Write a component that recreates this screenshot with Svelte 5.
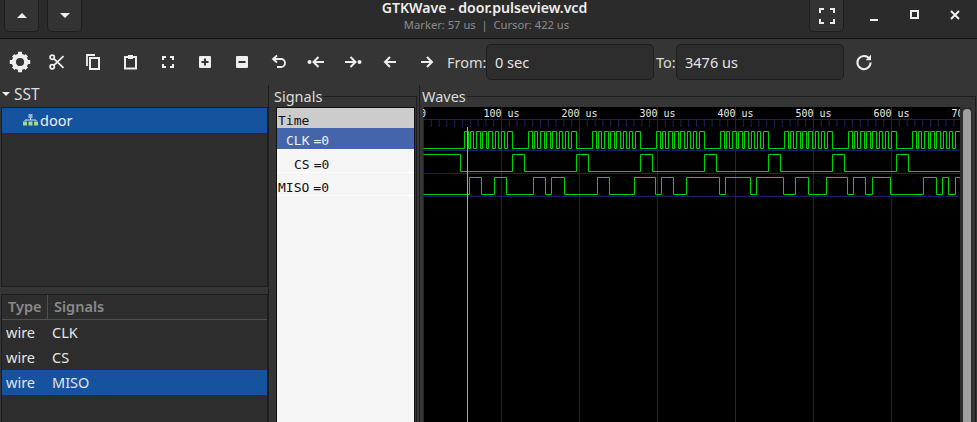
<script>
	const scale = 0.78;
	const majors = [0, 100, 200, 300, 400, 500, 600, 700];
	const ticks = Array.from({ length: 71 }, (_, i) => i * 10).filter((t) => t % 100 !== 0);
	const x0 = 0.5;
	const tx = (t) => x0 + t * scale;

	// edges in canvas px, wave starts low or high
	function wave(edges, hi, lo, startHigh) {
		let high = startHigh;
		let d = `M0.5 ${high ? hi : lo}`;
		for (const e of edges) {
			d += ` H${e} V${high ? lo : hi}`;
			high = !high;
		}
		return d + ` H537`;
	}

	const clkEdges = [];
	for (let b = 0; b < 8; b++) {
		const s = 41 + b * 64;
		for (let p = 0; p < 8; p++) {
			const rise = s + p * 6.1;
			const width = p === 0 ? 4 : p === 7 ? 5 : 3.3;
			clkEdges.push(Math.round(rise) + 0.5, Math.round(rise + width) + 0.5);
		}
	}
	const clkPath = wave(clkEdges.filter((e) => e < 537), 24.5, 41.5, false);

	const csPath = wave(
		[37.5, 89.5, 101.5, 153.5, 165.5, 217.5, 229.5, 281.5, 293.5, 345.5, 357.5, 409.5, 421.5, 473.5, 485.5],
		47.5, 64.5, true
	);

	const misoPath = wave(
		[46.5, 58.5, 71.5, 83.5, 110.5, 122.5, 128.5, 141.5, 174.5, 186.5, 211.5, 232.5, 238.5, 250.5, 263.5, 296.5, 302.5, 327.5, 333.5, 360.5, 372.5, 385.5, 403.5, 424.5, 430.5, 442.5, 449.5, 467.5, 500.5, 513.5, 519.5, 525.5, 532.5],
		70.5, 87.5, false
	);

	const tools = ['gear', 'cut', 'copy', 'paste', 'fit', 'plus', 'minus', 'undo', 'prev', 'next', 'left', 'right'];
</script>

<div class="window">
	<header class="titlebar">
		<div class="side">
			<button class="hbtn"><span class="tri up"></span></button>
			<button class="hbtn"><span class="tri down"></span></button>
		</div>
		<div class="title">
			<div class="name">GTKWave - door.pulseview.vcd</div>
			<div class="sub">Marker: 57 us &nbsp;|&nbsp; Cursor: 422 us</div>
		</div>
		<div class="side right">
			<button class="hbtn">
				<svg width="16" height="16" viewBox="0 0 16 16"><path d="M1 5V1H5M11 1H15V5M15 11V15H11M5 15H1V11" class="st" /></svg>
			</button>
			<div class="wctl">
				<svg width="16" height="16" viewBox="0 0 16 16"><rect x="3" y="12" width="8" height="2" fill="#eee" /></svg>
				<svg width="16" height="16" viewBox="0 0 16 16"><rect x="4" y="4" width="7" height="7" fill="none" stroke="#eee" stroke-width="2" /></svg>
				<svg width="16" height="16" viewBox="0 0 16 16"><path d="M4 4L12 12M12 4L4 12" fill="none" stroke="#eee" stroke-width="2" /></svg>
			</div>
		</div>
	</header>

	<div class="toolbar">
		{#each tools as t}
			<span class="tool">
				{#if t === 'gear'}
					<svg width="22" height="22" viewBox="0 0 22 22">
						<circle cx="11" cy="11" r="6.2" fill="none" stroke="#eee" stroke-width="4.2" />
						<path d="M9 .8H13V4H9ZM9 18H13V21.2H9ZM.8 9H4V13H.8ZM18 9H21.2V13H18ZM3 5.6L5.6 3L8 5.4L5.4 8ZM14 16.6L16.6 14L19 16.4L16.4 19ZM16.4 3L19 5.6L16.6 8L14 5.4ZM5.4 14L8 16.6L5.6 19L3 16.4Z" fill="#eee" />
					</svg>
				{:else if t === 'cut'}
					<svg width="16" height="16" viewBox="0 0 16 16">
						<circle cx="3.2" cy="3.2" r="2.1" class="st2" /><circle cx="3.2" cy="12.8" r="2.1" class="st2" />
						<path d="M4.8 4.6L14.5 13.8M4.8 11.4L14.5 2.2" class="st2" />
					</svg>
				{:else if t === 'copy'}
					<svg width="16" height="16" viewBox="0 0 16 16">
						<path d="M1 12V1H9" class="st2" /><rect x="4" y="4" width="9" height="11" class="st" />
					</svg>
				{:else if t === 'paste'}
					<svg width="16" height="16" viewBox="0 0 16 16">
						<path d="M5 3H2V14.5H13V3H10" class="st" /><rect x="5" y="1" width="5" height="4" fill="#eee" />
					</svg>
				{:else if t === 'fit'}
					<svg width="16" height="16" viewBox="0 0 16 16"><path d="M3 6V3H6M10 3H13V6M13 10V13H10M6 13H3V10" class="st" /></svg>
				{:else if t === 'plus'}
					<svg width="16" height="16" viewBox="0 0 16 16">
						<rect x="2" y="2" width="12" height="12" rx="1" fill="#eee" /><path d="M4.5 8H11.5M8 4.5V11.5" stroke="#333" stroke-width="2" />
					</svg>
				{:else if t === 'minus'}
					<svg width="16" height="16" viewBox="0 0 16 16">
						<rect x="2" y="2" width="12" height="12" rx="1" fill="#eee" /><path d="M4.5 8H11.5" stroke="#333" stroke-width="2" />
					</svg>
				{:else if t === 'undo'}
					<svg width="16" height="16" viewBox="0 0 16 16">
						<path d="M3 5H10A3.8 3.8 0 0 1 10 13H6" class="st2" /><path d="M6 1.5L2 5L6 8.5" class="st2" />
					</svg>
				{:else if t === 'prev'}
					<svg width="18" height="16" viewBox="0 0 18 16">
						<circle cx="2.5" cy="8" r="2" fill="#eee" /><path d="M7 8H17M11.5 3L6.5 8L11.5 13" class="st" />
					</svg>
				{:else if t === 'next'}
					<svg width="18" height="16" viewBox="0 0 18 16">
						<circle cx="15.5" cy="8" r="2" fill="#eee" /><path d="M1 8H11M6.5 3L11.5 8L6.5 13" class="st" />
					</svg>
				{:else if t === 'left'}
					<svg width="16" height="16" viewBox="0 0 16 16"><path d="M3 8H14M8 3L3 8L8 13" class="st" /></svg>
				{:else}
					<svg width="16" height="16" viewBox="0 0 16 16"><path d="M2 8H13M8 3L13 8L8 13" class="st" /></svg>
				{/if}
			</span>
		{/each}
		<span class="lbl from">From:</span>
		<div class="entry">0 sec</div>
		<span class="lbl to">To:</span>
		<div class="entry">3476 us</div>
		<span class="tool reload">
			<svg width="18" height="18" viewBox="0 0 18 18">
				<path d="M14.6 6A6.6 6.6 0 1 0 15.6 9.6" class="st" /><path d="M16 1.8V7.2H10.6Z" fill="#eee" />
			</svg>
		</span>
	</div>

	<main class="panes">
		<section class="left">
			<div class="sst-head"><span class="tri small"></span>SST</div>
			<div class="tree">
				<div class="tree-row">
					<svg width="15" height="12" viewBox="0 0 15 12">
						<rect x="5.5" y="0" width="4" height="4" fill="#8fb8ea" />
						<path d="M7.5 4V6M2 7V6H13V7" stroke="#d8e6f5" fill="none" />
						<rect x="0" y="7.5" width="4" height="4" fill="#a5dc8a" />
						<rect x="5.5" y="7.5" width="4" height="4" fill="#a5dc8a" />
						<rect x="11" y="7.5" width="4" height="4" fill="#a5dc8a" />
					</svg>
					<span>door</span>
				</div>
			</div>
			<div class="siglist">
				<div class="list-head"><span class="c1">Type</span><span class="c2">Signals</span></div>
				<div class="list-row"><span class="c1">wire</span><span>CLK</span></div>
				<div class="list-row"><span class="c1">wire</span><span>CS</span></div>
				<div class="list-row sel"><span class="c1">wire</span><span>MISO</span></div>
			</div>
		</section>

		<section class="signals">
			<div class="frame-label">Signals</div>
			<div class="frame-body">
				<div class="sig-box">
					<div class="sig time">Time</div>
					<div class="sig clk"><span>CLK</span>=0</div>
					<div class="sig cs"><span>CS</span>=0</div>
					<div class="sig miso"><span>MISO</span>=0</div>
				</div>
			</div>
		</section>

		<section class="waves">
			<div class="frame-label">Waves</div>
			<div class="frame-body wave-box">
				<svg class="canvas" width="537" height="315" viewBox="0 0 537 315">
					<rect width="537" height="315" fill="#000" />
					{#each majors as m}
						<line x1={tx(m)} x2={tx(m)} y1="0" y2="315" stroke="#1e1e68" />
					{/each}
					<line x1="0" x2="537" y1="12.5" y2="12.5" stroke="#1e1e68" />
					{#each ticks as t}
						<line x1={tx(t)} x2={tx(t)} y1="13" y2="20" stroke="#1e1e68" />
					{/each}
					<line x1="0" x2="537" y1="43.5" y2="43.5" stroke="#1e1e68" />
					<line x1="0" x2="537" y1="66.5" y2="66.5" stroke="#1e1e68" />
					<line x1="0" x2="537" y1="89.5" y2="89.5" stroke="#1e1e68" />
					<text x="-3" y="10" class="tlabel">0</text>
					{#each majors.slice(1) as m}
						<text x={tx(m) - 18} y="10" class="tlabel">{m}</text>
						<text x={tx(m) + 6} y="10" class="tlabel">us</text>
					{/each}
					<path d={clkPath} class="trace" />
					<path d={csPath} class="trace" />
					<path d={misoPath} class="trace" />
					<line x1="44.5" x2="44.5" y1="20" y2="315" stroke="#f08a8a" />
				</svg>
				<div class="scrollbar"><div class="thumb"></div></div>
			</div>
		</section>
	</main>
</div>

<style>
	:global(body) {
		margin: 0;
		background: #333;
		overflow: hidden;
	}

	.window {
		width: 977px;
		height: 422px;
		display: flex;
		flex-direction: column;
		font-family: 'Noto Sans', sans-serif;
		color: #eeeeec;
		background: #353535;
		overflow: hidden;
	}

	.titlebar {
		height: 38px;
		flex: none;
		display: grid;
		grid-template-columns: 1fr auto 1fr;
		background: #2b2b2b;
		border-bottom: 1px solid #131313;
	}

	.side {
		display: flex;
		gap: 8px;
		padding-left: 4px;
	}

	.side.right {
		justify-content: flex-end;
		padding: 0;
		gap: 0;
	}

	.hbtn {
		width: 35px;
		height: 32px;
		padding: 0;
		display: flex;
		align-items: center;
		justify-content: center;
		background: #333;
		border: 1px solid #1d1d1d;
		border-top: none;
		border-radius: 0 0 5px 5px;
		box-sizing: border-box;
	}

	.tri {
		width: 0;
		height: 0;
		border-left: 5px solid transparent;
		border-right: 5px solid transparent;
	}

	.tri.up {
		border-bottom: 5px solid #eee;
	}

	.tri.down {
		border-top: 5px solid #eee;
	}

	.tri.small {
		border-left-width: 4px;
		border-right-width: 4px;
		border-top: 4px solid #eee;
		margin-right: 4px;
		margin-left: 2px;
	}

	.title {
		text-align: center;
		padding-right: 4px;
	}

	.name {
		font-size: 14.1px;
		font-weight: 600;
		line-height: 15px;
		padding-right: 4px;
	}

	.sub {
		font-size: 11.2px;
		line-height: 12px;
		color: #8b8b8b;
		margin-top: 4px;
	}

	.wctl {
		display: flex;
		gap: 24px;
		align-items: center;
		height: 30px;
		padding: 0 14px 0 23px;
	}

	.toolbar {
		height: 46px;
		flex: none;
		display: flex;
		align-items: center;
		padding-left: 1px;
		background: #353535;
	}

	.tool {
		width: 37px;
		display: flex;
		align-items: center;
		justify-content: center;
		flex: none;
	}

	.reload {
		margin-left: 1px;
	}

	.st {
		fill: none;
		stroke: #eee;
		stroke-width: 2;
	}

	.st2 {
		fill: none;
		stroke: #eee;
		stroke-width: 1.8;
	}

	.lbl {
		font-size: 14.5px;
		color: #dcdcdc;
		flex: none;
	}

	.from {
		margin-left: 2px;
		width: 39px;
	}

	.to {
		margin-left: 2px;
		width: 20px;
	}

	.entry {
		width: 168px;
		height: 36px;
		box-sizing: border-box;
		flex: none;
		background: #2d2d2d;
		border: 1px solid #1d1d1d;
		border-radius: 5px;
		padding-left: 8px;
		font-size: 14.5px;
		line-height: 34px;
		color: #e4e4e4;
	}

	.panes {
		flex: 1;
		display: flex;
		min-height: 0;
	}

	.left {
		width: 269px;
		flex: none;
		display: flex;
		flex-direction: column;
		border-right: 1px solid #1d1d1d;
		box-sizing: border-box;
	}

	.sst-head {
		height: 22px;
		padding-bottom: 5px;
		box-sizing: border-box;
		display: flex;
		align-items: center;
		font-size: 15.5px;
		color: #dcdcdc;
		flex: none;
	}

	.tree {
		height: 180px;
		flex: none;
		margin: 0 0 7px 1px;
		background: #2d2d2d;
		border: 1px solid #1d1d1d;
		box-sizing: border-box;
	}

	.tree-row {
		height: 25px;
		padding-bottom: 2px;
		box-sizing: border-box;
		background: #15539e;
		display: flex;
		align-items: center;
		padding-left: 21px;
		gap: 2px;
		font-size: 14.5px;
	}

	.siglist {
		flex: 1;
		margin: 0 0 0 1px;
		background: #2d2d2d;
		border: 1px solid #1d1d1d;
		border-bottom: none;
	}

	.list-head {
		height: 25px;
		padding-bottom: 2px;
		box-sizing: border-box;
		display: flex;
		align-items: center;
		font-size: 14.5px;
		font-weight: 600;
		color: #8a8a8a;
		border-bottom: 1px solid #505050;
	}

	.list-head .c1 {
		width: 46px;
		padding-left: 6px;
		box-sizing: border-box;
		border-right: 1px solid #505050;
		line-height: 23px;
		margin-bottom: -2px;
		padding-bottom: 2px;
	}

	.c2 {
		padding-left: 6px;
	}

	.list-row {
		height: 25px;
		padding-bottom: 2px;
		box-sizing: border-box;
		display: flex;
		align-items: center;
		font-size: 14.5px;
		color: #e4e4e4;
	}

	.list-row .c1 {
		width: 50px;
		padding-left: 4px;
		box-sizing: border-box;
	}

	.list-row.sel {
		background: #15539e;
	}

	.signals {
		width: 146px;
		flex: none;
		margin-left: 2px;
		padding-left: 2px;
		display: flex;
		flex-direction: column;
		box-sizing: border-box;
	}

	.frame-label {
		height: 22px;
		flex: none;
		display: flex;
		align-items: center;
		gap: 1px;
		font-size: 14.5px;
		color: #dcdcdc;
		padding-left: 1px;
	}

	.frame-label::after {
		content: '';
		flex: 1;
		height: 1px;
		margin-top: 1px;
		background: #1d1d1d;
	}

	.frame-body {
		flex: 1;
		min-height: 0;
		display: flex;
		margin-top: -11px;
		padding-top: 11px;
		border-right: 1px solid #1d1d1d;
	}

	.sig-box {
		flex: 1;
		margin: 0 1px 0 3px;
		background: #f5f5f5;
		border-left: 1px solid #111;
		border-right: 1px solid #111;
		border-top: 1px solid #111;
		font-family: 'DejaVu Sans Mono', monospace;
		font-size: 13px;
		color: #111;
	}

	.sig {
		height: 22px;
		line-height: 26px;
		padding-left: 1px;
		border-bottom: 1px solid #fff;
		box-sizing: border-box;
		white-space: pre;
	}

	.sig span {
		margin-right: 4px;
	}

	.time {
		height: 20px;
		line-height: 26px;
		background: #cccccc;
		border: none;
	}

	.clk {
		background: #4464ac;
		color: #f0f0f0;
		padding-left: 9px;
	}

	.cs {
		height: 23px;
		line-height: 30px;
		padding-left: 17px;
	}

	.miso {
		height: 23px;
		line-height: 30px;
	}

	.waves {
		flex: 1;
		min-width: 0;
		margin-left: 2px;
		padding: 0 1px 0 1px;
		border-left: 1px solid #1d1d1d;
		display: flex;
		flex-direction: column;
	}

	.wave-box {
		margin-left: 2px;
	}

	.canvas {
		display: block;
		flex: none;
	}

	.tlabel {
		font-family: 'DejaVu Sans Mono', monospace;
		font-size: 10px;
		fill: #eaeaea;
	}

	.trace {
		fill: none;
		stroke: #00d400;
		stroke-width: 1;
	}

	.scrollbar {
		width: 12px;
		flex: none;
		background: #2d2d2d;
		padding-left: 3px;
		box-sizing: border-box;
	}

	.thumb {
		width: 8px;
		height: 320px;
		margin-top: 2px;
		background: #a0a0a0;
		border-radius: 4px;
	}
</style>
